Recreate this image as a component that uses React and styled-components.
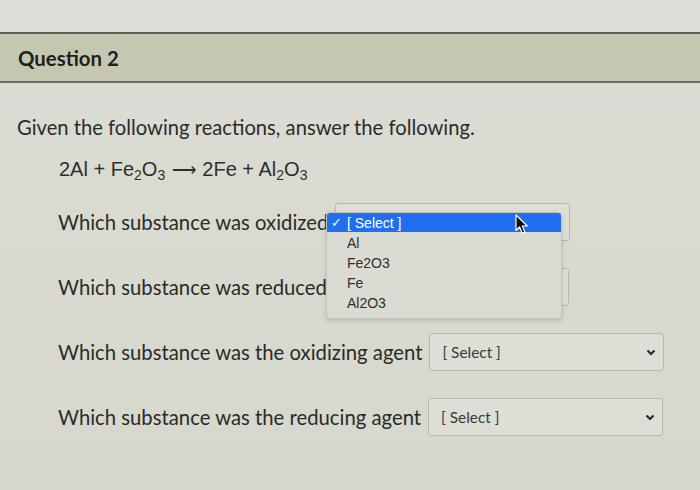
import React from "react";
import styled, { createGlobalStyle } from "styled-components";

const GlobalStyle = createGlobalStyle`
  html, body {
    margin: 0;
    padding: 0;
    background: #d9dad1;
  }
  * {
    box-sizing: border-box;
  }
`;

const Page = styled.div`
  width: 700px;
  height: 490px;
  overflow: hidden;
  position: relative;
  font-family: Lato, "Open Sans", sans-serif;
  color: #262626;
  background: linear-gradient(180deg, #dcdcd7 0%, #d9dbd1 40%, #d6d8cc 100%);
`;

const TopStrip = styled.div`
  height: 32px;
  background: #dddcd8;
`;

const Header = styled.div`
  height: 51px;
  display: flex;
  align-items: center;
  padding-left: 18px;
  background: #c5c8b1;
  border-top: 2px solid #5d5f58;
  border-bottom: 2px solid #6c6e66;
  font-size: 20.4px;
  font-weight: 700;
  color: #1f1f1f;
`;

const Intro = styled.p`
  margin: 32px 0 0 17px;
  font-size: 20.2px;
  line-height: 24px;
  color: #2b2b2b;
`;

const Equation = styled.div`
  margin: 18px 0 0 59px;
  font-family: "Liberation Sans", Arial, sans-serif;
  font-size: 20px;
  line-height: 24px;
  color: #2e2e2e;
  sub {
    font-size: 14px;
    vertical-align: -4px;
    line-height: 0;
  }
`;

const Arrow = styled.span`
  display: inline-block;
  font-size: 17px;
  margin: 0 1px;
`;

const QuestionList = styled.div`
  position: relative;
  margin: 20px 0 0 58px;
  display: flex;
  flex-direction: column;
  gap: 27px;
`;

const Row = styled.div`
  display: flex;
  align-items: center;
  gap: 7px;
  height: 38px;
`;

const Label = styled.span`
  font-size: 20.3px;
  color: #2a2a2a;
  white-space: nowrap;
`;

const SelectBox = styled.div`
  width: 235px;
  height: 38px;
  flex-shrink: 0;
  display: flex;
  align-items: center;
  justify-content: space-between;
  padding: 0 7px 0 12px;
  border: 1px solid #b7b9ae;
  border-radius: 3px;
  background: #dddfd7;
  font-size: 15.4px;
  color: #3a3a3a;
  span {
    visibility: ${(p) => (p.$covered ? "hidden" : "visible")};
  }
`;

const Menu = styled.div`
  position: absolute;
  left: 268px;
  top: 9px;
  width: 236px;
  height: 107px;
  background: #dadbd3;
  border: 1px solid #c2c3bb;
  border-radius: 4px;
  box-shadow: 0 2px 5px rgba(0, 0, 0, 0.14);
  font-family: "Liberation Sans", Arial, sans-serif;
  font-size: 14px;
  color: #2f2f2f;
  z-index: 2;
`;

const MenuItem = styled.div`
  height: ${(p) => (p.$active ? 19 : 20)}px;
  display: flex;
  align-items: center;
  padding-left: 20px;
  position: relative;
  background: ${(p) => (p.$active ? "#1f6ff0" : "transparent")};
  color: ${(p) => (p.$active ? "#ffffff" : "#2f2f2f")};
  border-radius: ${(p) => (p.$active ? "3px 3px 0 0" : "0")};
  margin-bottom: ${(p) => (p.$active ? 1 : 0)}px;
`;

const Check = styled.span`
  position: absolute;
  left: 4px;
  font-size: 13px;
`;

const Cursor = styled.svg`
  position: absolute;
  left: 457px;
  top: 11px;
  z-index: 3;
`;

const Chevron = () => (
  <svg width="10" height="7" viewBox="0 0 10 7">
    <path d="M1.5 1.5 L5 5 L8.5 1.5" fill="none" stroke="#2a2a2a" strokeWidth="2.2" />
  </svg>
);

const Select = ({ covered }) => (
  <SelectBox $covered={covered}>
    <span>[ Select ]</span>
    <Chevron />
  </SelectBox>
);

const questions = [
  { text: "Which substance was oxidized", covered: true },
  { text: "Which substance was reduced", covered: true },
  { text: "Which substance was the oxidizing agent" },
  { text: "Which substance was the reducing agent" },
];

const options = ["Al", "Fe2O3", "Fe", "Al2O3"];

export default function App() {
  return (
    <Page>
      <GlobalStyle />
      <TopStrip />
      <Header>Question 2</Header>
      <Intro>Given the following reactions, answer the following.</Intro>
      <Equation>
        2Al + Fe<sub>2</sub>O<sub>3</sub> <Arrow>⟶</Arrow> 2Fe + Al<sub>2</sub>O<sub>3</sub>
      </Equation>
      <QuestionList>
        {questions.map((q) => (
          <Row key={q.text}>
            <Label>{q.text}</Label>
            <Select covered={q.covered} />
          </Row>
        ))}
        <Menu>
          <MenuItem $active>
            <Check>✓</Check>[ Select ]
          </MenuItem>
          {options.map((o) => (
            <MenuItem key={o}>{o}</MenuItem>
          ))}
        </Menu>
        <Cursor width="14" height="21" viewBox="0 0 14 21">
          <path
            d="M1 1 L1 16.5 L4.6 13 L7.2 19.2 L9.8 18.1 L7.3 12 L12.3 12 Z"
            fill="#111"
            stroke="#fff"
            strokeWidth="1.2"
            strokeLinejoin="round"
          />
        </Cursor>
      </QuestionList>
    </Page>
  );
}
